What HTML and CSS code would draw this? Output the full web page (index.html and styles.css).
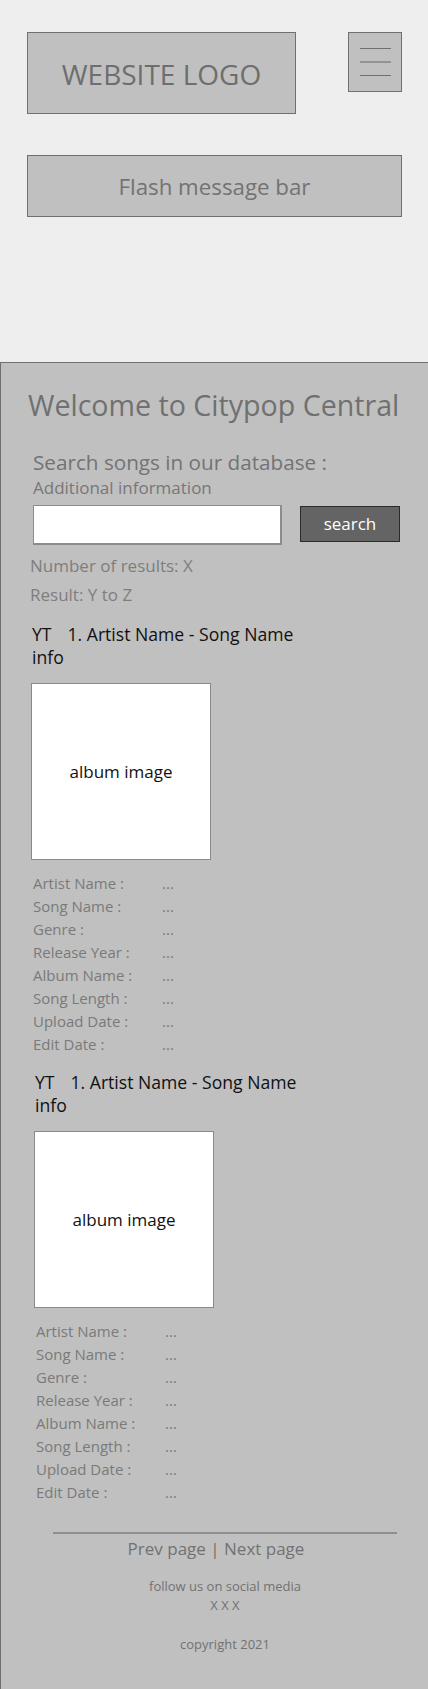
FILE: index.html
```html
<!DOCTYPE html>
<html lang="en">
<head>
<meta charset="utf-8">
<title>Citypop Central</title>
<link rel="stylesheet" href="styles.css">
</head>
<body>
<header class="top">
  <div class="top-row">
    <div class="logo">WEBSITE LOGO</div>
    <button class="menu" aria-label="menu">
      <span class="bar"></span>
      <span class="bar bar-mid"></span>
      <span class="bar"></span>
    </button>
  </div>
  <div class="flash">Flash message bar</div>
</header>
<main class="main">
  <h1 class="title">Welcome to Citypop Central</h1>
  <section class="search">
    <h2 class="search-head">Search songs in our database :</h2>
    <p class="search-info">Additional information</p>
    <form class="search-form">
      <input class="search-input" type="text">
      <button class="search-btn" type="button">search</button>
    </form>
  </section>
  <p class="count">Number of results: X</p>
  <p class="count">Result: Y to Z</p>

  <article class="entry">
    <p class="entry-title"><span class="yt">YT</span>1. Artist Name - Song Name<br>info</p>
    <div class="album">album image</div>
    <dl class="details">
      <dt>Artist Name :</dt><dd>...</dd>
      <dt>Song Name :</dt><dd>...</dd>
      <dt>Genre :</dt><dd>...</dd>
      <dt>Release Year :</dt><dd>...</dd>
      <dt>Album Name :</dt><dd>...</dd>
      <dt>Song Length :</dt><dd>...</dd>
      <dt>Upload Date :</dt><dd>...</dd>
      <dt>Edit Date :</dt><dd>...</dd>
    </dl>
  </article>

  <article class="entry entry-alt">
    <p class="entry-title"><span class="yt">YT</span>1. Artist Name - Song Name<br>info</p>
    <div class="album">album image</div>
    <dl class="details">
      <dt>Artist Name :</dt><dd>...</dd>
      <dt>Song Name :</dt><dd>...</dd>
      <dt>Genre :</dt><dd>...</dd>
      <dt>Release Year :</dt><dd>...</dd>
      <dt>Album Name :</dt><dd>...</dd>
      <dt>Song Length :</dt><dd>...</dd>
      <dt>Upload Date :</dt><dd>...</dd>
      <dt>Edit Date :</dt><dd>...</dd>
    </dl>
  </article>

  <footer class="footer">
    <p class="pager">Prev page | Next page</p>
    <p class="social">follow us on social media<br>X X X</p>
    <p class="copy">copyright 2021</p>
  </footer>
</main>
</body>
</html>
```
FILE: styles.css
```css
* { box-sizing: border-box; }
html, body { margin: 0; padding: 0; }
body {
  background: #eeeeee;
  font-family: "Open Sans", "Noto Sans", sans-serif;
  color: #707070;
  width: 428px;
  overflow-x: hidden;
}
p, h1, h2, dl, dt, dd { margin: 0; font-weight: 400; }

.top { padding: 32px 26px 0 27px; }
.top-row {
  display: flex;
  justify-content: space-between;
  align-items: flex-start;
}
.logo {
  width: 269px;
  height: 82px;
  background: #c0c0c0;
  border: 1px solid #707070;
  display: flex;
  align-items: center;
  justify-content: center;
  font-size: 28px;
  color: #6e6e6e;
  padding-top: 2px;
}
.menu {
  width: 54px;
  height: 60px;
  background: #c0c0c0;
  border: 1px solid #707070;
  padding: 15px 10px 0 10px;
  display: flex;
  flex-direction: column;
  align-items: center;
  gap: 12px;
}
.bar { display: block; width: 31px; height: 1px; background: #707070; }
.bar-mid { height: 2px; background: #939393; }

.flash {
  margin-top: 41px;
  height: 62px;
  background: #c0c0c0;
  border: 1px solid #707070;
  display: flex;
  align-items: center;
  justify-content: center;
  font-size: 22.3px;
  color: #737373;
  padding-top: 1px;
}

.main {
  margin-top: 145px;
  background: #c0c0c0;
  border-top: 1px solid #707070;
  border-left: 1px solid #707070;
  width: 440px;
  padding: 22px 0 30px 0;
  min-height: 1327px;
}
.title {
  font-size: 28.6px;
  line-height: 40px;
  margin-left: 27px;
  color: #707070;
}
.search { margin: 22px 0 0 32px; }
.search-head { font-size: 20.7px; line-height: 30px; color: #737373; }
.search-info { font-size: 17px; line-height: 22px; color: #777; }
.search-form { display: flex; align-items: flex-start; margin-top: 6px; gap: 18px; }
.search-input {
  width: 249px;
  height: 40px;
  background: #fff;
  border: 1px solid #8c8c8c;
  border-width: 1px 2px 2px 1px;
  margin: 0;
}
.search-btn {
  width: 100px;
  height: 36px;
  margin-top: 1px;
  background: #646464;
  border: 1px solid #2a2a2a;
  color: #fff;
  font-family: inherit;
  font-size: 17px;
  padding: 0 0 2px 0;
}
.count { font-size: 17px; line-height: 29px; color: #7e7e7e; margin-left: 29px; }
.count:first-of-type { margin-top: 6px; }

.entry { margin: 14px 0 0 31px; }
.entry-alt { margin: 15px 0 0 34px; }
.entry-title { font-size: 17.6px; line-height: 23px; color: #111; }
.yt { margin-right: 16px; }
.album {
  width: 180px;
  height: 177px;
  margin: 14px 0 0 -1px;
  background: #fff;
  border: 1px solid #8a8a8a;
  display: flex;
  align-items: center;
  justify-content: center;
  font-size: 17px;
  color: #111;
}
.details {
  display: grid;
  grid-template-columns: 129px auto;
  font-size: 15px;
  line-height: 23px;
  color: #7a7a7a;
  margin: 12px 0 0 1px;
}

.footer {
  margin: 28px 0 0 52px;
  width: 344px;
  border-top: 2px solid #8f8f8f;
  text-align: center;
  color: #727272;
}
.pager { font-size: 17px; line-height: 27px; padding-top: 1px; margin-left: -18px; }
.social { font-size: 13px; line-height: 19px; margin-top: 15px; }
.copy { font-size: 13px; line-height: 19px; margin-top: 20px; }
```
